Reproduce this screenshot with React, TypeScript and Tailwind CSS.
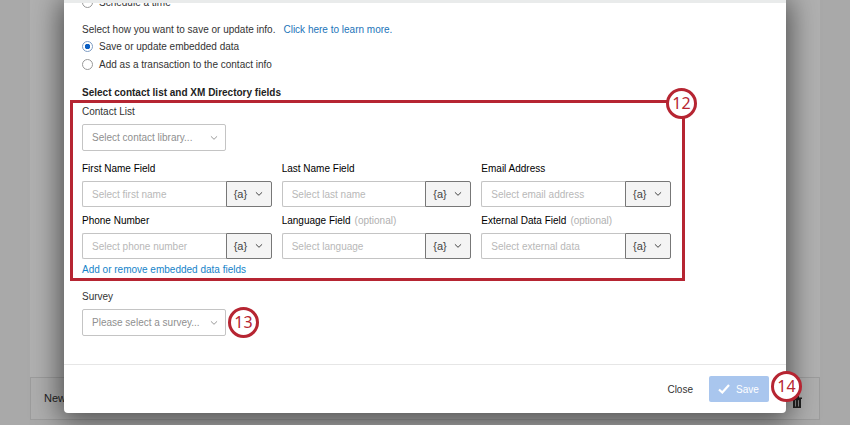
import React, { useId } from "react";

function Chevron({ className }: { className: string }) {
  return (
    <svg viewBox="0 0 8 8" className={className} fill="none" stroke="currentColor" aria-hidden="true">
      <path d="M1.2 2.6 4 5.3 6.8 2.6" strokeLinecap="round" strokeLinejoin="round" />
    </svg>
  );
}

function Radio({ label, checked = false }: { label: string; checked?: boolean }) {
  return (
    <label className="flex h-[18px] items-center gap-[6px]">
      <input
        type="radio"
        name="save-mode"
        defaultChecked={checked}
        className="size-[11px] shrink-0 appearance-none rounded-full border border-[#999] bg-white checked:border-[#7d9cc4] checked:bg-[radial-gradient(circle,#0b5fc4_0_2.5px,#fff_3px)]"
      />
      {label}
    </label>
  );
}

function Picker({ label, text }: { label: string; text: string }) {
  const id = useId();
  return (
    <div>
      <label htmlFor={id} className="block h-[21px] leading-[18px]">
        {label}
      </label>
      <div className="relative w-36">
        <select
          id={id}
          className="block h-[27px] w-full appearance-none rounded-xs border border-[#c4c4c4] bg-white pr-4 pl-[9px] text-[#8f8f8f]"
        >
          <option>{text}</option>
        </select>
        <Chevron className="pointer-events-none absolute top-[10px] right-2 size-2 text-[#999]" />
      </div>
    </div>
  );
}

function Field({ label, placeholder, optional = false }: { label: string; placeholder: string; optional?: boolean }) {
  const id = useId();
  return (
    <div>
      <label htmlFor={id} className="block h-[21px] leading-[18px] text-black">
        {label}
        {optional && <span className="pl-1 text-[#b0b0b0]">(optional)</span>}
      </label>
      <div className="flex h-[26px]">
        <input
          id={id}
          placeholder={placeholder}
          className="min-w-0 flex-1 rounded-l-xs border border-r-0 border-[#c4c4c4] bg-white px-[9px] placeholder:text-[#b8b8b8]"
        />
        <button
          type="button"
          aria-label={"Insert piped text for " + label}
          className="flex w-[46px] items-center justify-between rounded-r-xs border border-[#777] bg-[#f4f4f4] pr-2 pl-[7px] text-[11px] text-[#444]"
        >
          {"{a}"}
          <Chevron className="size-2" />
        </button>
      </div>
    </div>
  );
}

function Step({ n, className = "" }: { n: number; className?: string }) {
  return (
    <span
      className={
        "flex size-[31px] shrink-0 items-center justify-center rounded-full border-3 border-[#b62532] bg-white pb-px font-['Noto_Sans',sans-serif] text-base leading-none text-[#b62532] " +
        className
      }
    >
      {n}
    </span>
  );
}

export default function App() {
  return (
    <div className="relative flex h-screen flex-col overflow-hidden bg-[#a9a9a9] px-[30px] pb-[5px] font-['Liberation_Sans',Arial,sans-serif] text-[10px] text-[#333]">
      <div className="flex-1 bg-[#b0b0b0]" />
      <div className="flex h-[43px] items-center justify-between border border-[#9c9c9c] bg-[#aeaeae] pr-[17px] pl-[13px] text-[#222]">
        <span className="text-[11px]">New Task</span>
        <button type="button" aria-label="Delete" className="pt-[6px]">
          <svg viewBox="0 0 10 12" className="h-3 w-[10px]" aria-hidden="true">
            <path d="M0 1.5h3V0h4v1.5h3V3H0zM1 3h8v9H1z" fill="#222" />
            <path d="M3.5 4.2v6.3M6.5 4.2v6.3" stroke="#999" strokeWidth="0.9" />
          </svg>
        </button>
      </div>

      <div
        role="dialog"
        aria-label="Contact list settings"
        className="absolute inset-x-16 top-0 bottom-3 flex flex-col rounded-b-sm bg-white shadow-[0_4px_28px_4px_rgba(0,0,0,0.55)]"
      >
        <div className="h-[3px] shrink-0 bg-[#e9ebeb]" />
        <div className="min-h-0 flex-1 overflow-hidden px-[18px]">
          <div className="-mt-[10px]">
            <Radio label="Schedule a time" />
          </div>
          <p className="mt-[10px] flex h-4 items-center gap-2">
            Select how you want to save or update info.
            <a href="#learn" className="text-[#2274b9]">
              Click here to learn more.
            </a>
          </p>
          <Radio label="Save or update embedded data" checked />
          <Radio label="Add as a transaction to the contact info" />
          <h2 className="mt-[10px] h-[17px] font-bold leading-[19px] text-[#222]">
            Select contact list and XM Directory fields
          </h2>
          <section className="relative -ml-3 max-w-[615px] border-3 border-[#b62532] pr-[11px] pl-[9px]">
            <Picker label="Contact List" text="Select contact library..." />
            <div className="mt-[9px] grid grid-cols-3 gap-x-[10px] gap-y-[5px]">
              <Field label="First Name Field" placeholder="Select first name" />
              <Field label="Last Name Field" placeholder="Select last name" />
              <Field label="Email Address" placeholder="Select email address" />
              <Field label="Phone Number" placeholder="Select phone number" />
              <Field label="Language Field" placeholder="Select language" optional />
              <Field label="External Data Field" placeholder="Select external data" optional />
            </div>
            <a href="#fields" className="block h-[19px] leading-[21px] text-[#1583c9]">
              Add or remove embedded data fields
            </a>
            <Step n={12} className="absolute -top-[15px] -right-[15px]" />
          </section>
          <div className="mt-[7px] flex items-end gap-[2px]">
            <Picker label="Survey" text="Please select a survey..." />
            <Step n={13} className="-mb-[2px]" />
          </div>
        </div>
        <footer className="relative flex h-[49px] shrink-0 items-center justify-end gap-4 border-t border-[#e6e6e6] pr-[17px]">
          <button type="button">Close</button>
          <button
            type="button"
            className="flex h-[26px] w-[60px] items-center gap-[6px] rounded-xs bg-[#a9c6ee] pl-[9px] text-white"
          >
            <svg viewBox="0 0 12 10" className="h-[10px] w-3" fill="none" stroke="currentColor" strokeWidth="2.2" aria-hidden="true">
              <path d="M1 5.5 4.3 8.5 11 1" />
            </svg>
            Save
          </button>
          <Step n={14} className="absolute top-[6px] -right-4" />
        </footer>
      </div>
    </div>
  );
}
